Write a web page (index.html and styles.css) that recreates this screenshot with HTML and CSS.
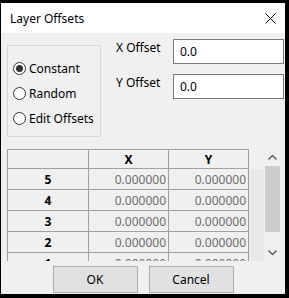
FILE: index.html
```html
<!DOCTYPE html>
<html lang="en">
<head>
  <meta charset="UTF-8" />
  <title>Layer Offsets</title>
  <link rel="stylesheet" href="styles.css">
</head>
<body>

  <div class="window">
    <div class="titlebar">
      <span class="title">Layer Offsets</span>
      <svg class="close" width="11" height="11" viewBox="0 0 11 11">
        <path d="M0.5 0.5 L10.5 10.5 M10.5 0.5 L0.5 10.5" stroke="#111" stroke-width="1" fill="none"/>
      </svg>
    </div>

    <div class="content">
      <div class="top">
        <div class="group">
          <div class="radio"><span class="circle checked"></span>Constant</div>
          <div class="radio"><span class="circle"></span>Random</div>
          <div class="radio"><span class="circle"></span>Edit Offsets</div>
        </div>
        <div class="fields">
          <div class="field">
            <span class="lbl">X Offset</span>
            <div class="input">0.0</div>
          </div>
          <div class="field">
            <span class="lbl">Y Offset</span>
            <div class="input">0.0</div>
          </div>
        </div>
      </div>

      <div class="table">
        <div class="grid">
          <div class="cell head"></div>
          <div class="cell head">X</div>
          <div class="cell head">Y</div>

          <div class="cell rowhead">5</div>
          <div class="cell num">0.000000</div>
          <div class="cell num">0.000000</div>

          <div class="cell rowhead">4</div>
          <div class="cell num">0.000000</div>
          <div class="cell num">0.000000</div>

          <div class="cell rowhead">3</div>
          <div class="cell num">0.000000</div>
          <div class="cell num">0.000000</div>

          <div class="cell rowhead">2</div>
          <div class="cell num">0.000000</div>
          <div class="cell num">0.000000</div>

          <div class="cell rowhead">1</div>
          <div class="cell num">0.000000</div>
          <div class="cell num">0.000000</div>
        </div>
        <div class="filler"></div>
        <div class="scrollbar">
          <svg class="arrow" width="17" height="17" viewBox="0 0 17 17">
            <path d="M4.5 10.5 L8.5 6.5 L12.5 10.5" stroke="#606060" stroke-width="1.5" fill="none"/>
          </svg>
          <div class="track"><div class="thumb"></div></div>
          <svg class="arrow" width="17" height="17" viewBox="0 0 17 17">
            <path d="M4.5 6.5 L8.5 10.5 L12.5 6.5" stroke="#606060" stroke-width="1.5" fill="none"/>
          </svg>
        </div>
      </div>

      <div class="buttons">
        <button>OK</button>
        <button>Cancel</button>
      </div>
    </div>
  </div>

</body>
</html>
```

FILE: styles.css
```css
body {
  margin: 0;
  background: #000;
  font-family: "Noto Sans", sans-serif;
  font-size: 12px;
  color: #000;
}
.window {
  margin: 3px 4px 4px 1px;
  width: 284px;
  height: 291px;
  display: flex;
  flex-direction: column;
  overflow: hidden;
}
.titlebar {
  height: 30px;
  background: #fff;
  display: flex;
  align-items: center;
  justify-content: space-between;
  padding: 0 9px 0 9px;
}
.close { margin-right: 0; }
.content {
  flex: 1;
  background: #f0f0f0;
  padding: 0 0 0 6px;
  display: flex;
  flex-direction: column;
}
.top {
  display: flex;
  align-items: flex-start;
}
.group {
  margin-top: 12px;
  width: 92px;
  height: 80px;
  border: 1px solid #d9d9d9;
  padding: 10px 0 0 5px;
  box-sizing: content-box;
}
.group { width: 87px; }
.radio {
  height: 25px;
  display: flex;
  align-items: center;
  white-space: nowrap;
}
.circle {
  width: 11px;
  height: 11px;
  border: 1px solid #333;
  border-radius: 50%;
  background: #fff;
  margin-right: 3px;
  position: relative;
}
.circle.checked::after {
  content: "";
  position: absolute;
  left: 2px;
  top: 2px;
  width: 7px;
  height: 7px;
  border-radius: 50%;
  background: #333;
}
.fields {
  margin-left: 15px;
  padding-top: 6px;
  display: flex;
  flex-direction: column;
  gap: 10px;
}
.field {
  display: flex;
  align-items: flex-start;
}
.lbl {
  width: 57px;
  line-height: 17px;
}
.input {
  width: 103px;
  height: 23px;
  line-height: 23px;
  border: 1px solid #7a7a7a;
  background: #fff;
  padding-left: 6px;
}
.table {
  margin-top: 12px;
  width: 274px;
  height: 112px;
  display: flex;
  overflow: hidden;
}
.grid {
  display: grid;
  grid-template-columns: 81px 80px 80px;
  grid-auto-rows: 21px;
  grid-template-rows: 19px;
  border-left: 1px solid #a0a0a0;
  border-top: 1px solid #a0a0a0;
  align-self: flex-start;
}
.cell {
  border-right: 1px solid #a0a0a0;
  border-bottom: 1px solid #a0a0a0;
  background: #f0f0f0;
  display: flex;
  align-items: center;
}
.head, .rowhead {
  justify-content: center;
  font-weight: bold;
}
.num {
  justify-content: flex-end;
  padding-right: 2px;
  color: #6d6d6d;
}
.filler {
  width: 15px;
  margin-top: 20px;
  background: #e9e9e9;
}
.scrollbar {
  width: 17px;
  background: #f0f0f0;
  display: flex;
  flex-direction: column;
}
.arrow { flex: none; }
.track {
  flex: 1;
  padding: 0 1px;
}
.thumb {
  height: 66px;
  background: #cdcdcd;
}
.buttons {
  margin-top: 5px;
  margin-left: -6px;
  display: flex;
  justify-content: center;
  gap: 11px;
}
button {
  width: 85px;
  height: 27px;
  background: #e1e1e1;
  border: 1px solid #adadad;
  font-family: "Noto Sans", sans-serif;
  font-size: 12px;
  color: #000;
  padding: 0;
}
```
